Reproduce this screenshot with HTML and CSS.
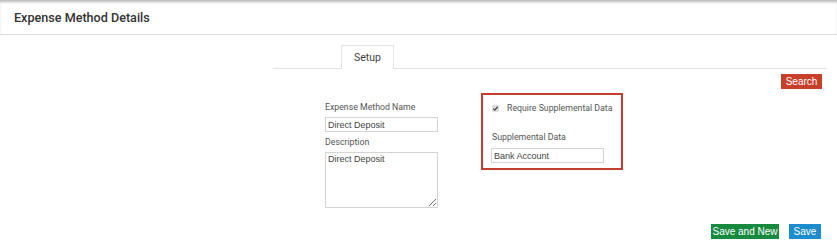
FILE: index.html
```html
<!DOCTYPE html>
<html>
<head>
<meta charset="utf-8">
<link rel="stylesheet" href="styles.css">
</head>
<body>
<header class="page-header">
  <h1 class="page-title">Expense Method Details</h1>
</header>
<main class="content">
  <div class="tabs">
    <div class="tab active">Setup</div>
  </div>
  <div class="toolbar">
    <button class="btn btn-search">Search</button>
  </div>
  <div class="form">
    <div class="col-left">
      <label class="label">Expense Method Name</label>
      <input class="input" type="text" value="Direct Deposit">
      <label class="label label-desc">Description</label>
      <textarea class="textarea">Direct Deposit</textarea>
    </div>
    <div class="supp-box">
      <div class="check-row">
        <span class="check"><svg width="7" height="7" viewBox="0 0 7 7"><path d="M1.3 3.6 L2.8 5.1 L5.7 1.8" fill="none" stroke="#444" stroke-width="1.3"/></svg></span>
        <span class="check-text">Require Supplemental Data</span>
      </div>
      <label class="label label-supp">Supplemental Data</label>
      <input class="input" type="text" value="Bank Account">
    </div>
  </div>
  <div class="actions">
    <button class="btn btn-green">Save and New</button>
    <button class="btn btn-blue">Save</button>
  </div>
</main>
</body>
</html>
```
FILE: styles.css
```css
html, body { margin: 0; padding: 0; background: #fff; }
body { font-family: Roboto, "Liberation Sans", sans-serif; color: #333; width: 837px; height: 252px; overflow: hidden; }
.page-header {
  height: 34px;
  border-bottom: 1px solid #dcdcdc;
  box-shadow: inset 0 3px 3px -1px #b8b8b8;
  display: flex;
  align-items: center;
  padding-left: 14px;
}
.page-title { margin: 0; font-size: 12.6px; font-weight: 500; color: #333; padding-top: 1px; }
.content { margin-left: 273px; width: 554px; }
.tabs { margin-top: 10px; border-bottom: 1px solid #e3e3e3; padding-left: 68px; display: flex; height: 23px; }
.tab {
  width: 53px; box-sizing: border-box;
  border: 1px solid #e3e3e3; border-bottom: none; background: #fff;
  font-size: 10.5px; color: #444; display: flex; align-items: center; justify-content: center;
  margin-bottom: -1px; height: 24px;
}
.toolbar { display: flex; justify-content: flex-end; padding-right: 5px; margin-top: 5px; }
.btn {
  border: none; color: #fff; font-family: "Liberation Sans", Arial, sans-serif;
  font-size: 10px; height: 15px; padding: 0; line-height: 15px; cursor: pointer;
}
.btn-search { background: #c8402c; width: 41px; }
.form { display: flex; align-items: flex-start; }
.col-left { margin-left: 52px; width: 113px; display: flex; flex-direction: column; padding-top: 12px; }
.label { font-size: 8.75px; color: #555; display: block; line-height: 12px; }
.input {
  box-sizing: border-box; width: 113px; height: 15px; border: 1px solid #d4d4d4;
  font-family: "Liberation Sans", Arial, sans-serif; font-size: 9px; color: #444; padding: 0 2px; margin: 0;
}
.col-left .input { margin-top: 4px; }
.label-desc { margin-top: 4px; }
.textarea {
  box-sizing: border-box; width: 113px; height: 56px; border: 1px solid #d4d4d4; margin: 4px 0 0;
  font-family: "Liberation Sans", Arial, sans-serif; font-size: 9px; color: #444; padding: 1px 2px; resize: both;
}
.supp-box {
  margin-left: 43px; margin-top: 4px; width: 142px; height: 77px; box-sizing: border-box;
  border: 2px solid #c43e2e; padding: 7px 0 0 9px;
}
.check-row { display: flex; align-items: center; font-size: 8.75px; color: #555; height: 12px; white-space: nowrap; }
.check {
  width: 7px; height: 7px; background: #dedede; border-radius: 1px; margin: 0 8px 0 0;
  display: flex; flex: none;
}
.label-supp { margin-top: 17px; }
.supp-box .input { margin: 5px 0 0 -1px; }
.actions { display: flex; justify-content: flex-end; gap: 10px; padding-right: 6px; margin-top: 16px; }
.btn-green { background: #178a3f; width: 68px; }
.btn-blue { background: #1b8dcd; width: 32px; }
```
